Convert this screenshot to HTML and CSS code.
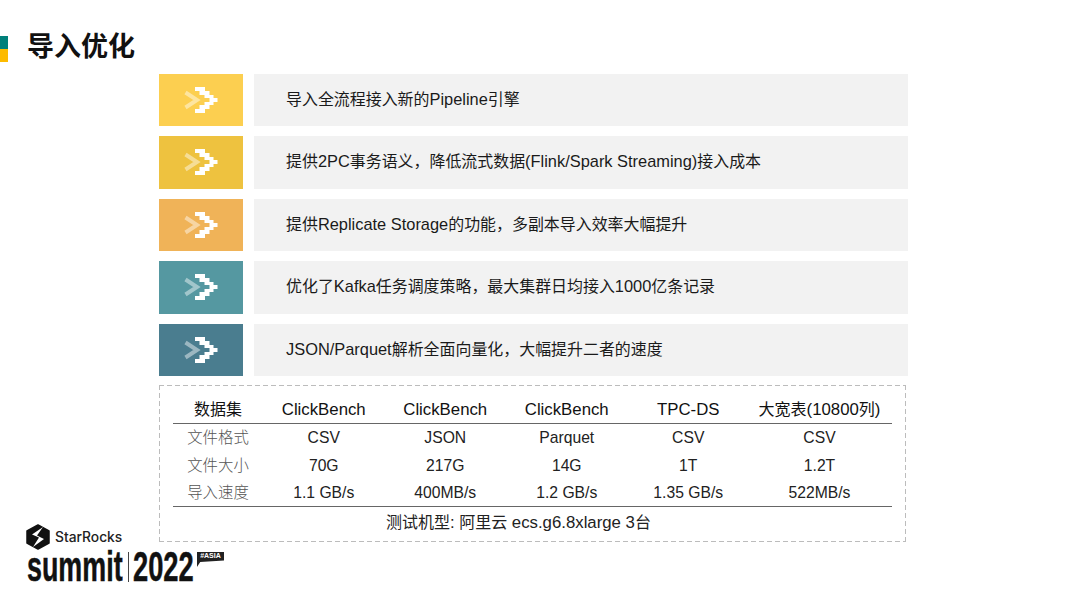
FILE: index.html
```html
<!DOCTYPE html>
<html lang="zh-CN">
<head>
<meta charset="utf-8">
<title>导入优化</title>
<link rel="stylesheet" href="styles.css">
</head>
<body>
<svg class="defs" width="0" height="0" aria-hidden="true">
  <defs>
    <g id="chev">
      <polyline class="chev-faint" points="26.5,18.5 38,26 26.5,33.5"/>
      <polygon class="chev-solid" points="36,13 46,13 46,17 50.5,17 50.5,21 54.5,21 54.5,24 58.5,24 58.5,28 54.5,28 54.5,31 50.5,31 50.5,35 46,35 46,39 36,39 36,35 40.5,35 40.5,31 45.5,31 45.5,28 50.5,28 50.5,24 45.5,24 45.5,21 40.5,21 40.5,17 36,17"/>
    </g>
  </defs>
</svg>
<main class="page">
  <header class="title-bar">
    <div class="marker"><span class="marker-teal"></span><span class="marker-gold"></span></div>
    <h1 class="title">导入优化</h1>
  </header>

  <section class="rows">
    <div class="row"><div class="tile tile-1"><svg viewBox="0 0 84 52"><use href="#chev"/></svg></div><p class="bar">导入全流程接入新的<span class="en">Pipeline</span>引擎</p></div>
    <div class="row"><div class="tile tile-2"><svg viewBox="0 0 84 52"><use href="#chev"/></svg></div><p class="bar">提供<span class="en">2PC</span>事务语义，降低流式数据<span class="en">(Flink/Spark Streaming)</span>接入成本</p></div>
    <div class="row"><div class="tile tile-3"><svg viewBox="0 0 84 52"><use href="#chev"/></svg></div><p class="bar">提供<span class="en">Replicate Storage</span>的功能，多副本导入效率大幅提升</p></div>
    <div class="row"><div class="tile tile-4"><svg viewBox="0 0 84 52"><use href="#chev"/></svg></div><p class="bar">优化了<span class="en">Kafka</span>任务调度策略，最大集群日均接入<span class="en">1000</span>亿条记录</p></div>
    <div class="row"><div class="tile tile-5"><svg viewBox="0 0 84 52"><use href="#chev"/></svg></div><p class="bar"><span class="en">JSON/Parquet</span>解析全面向量化，大幅提升二者的速度</p></div>
  </section>

  <section class="box">
    <div class="grid grid-head">
      <span>数据集</span><span class="en-h">ClickBench</span><span class="en-h">ClickBench</span><span class="en-h">ClickBench</span><span class="en-h">TPC-DS</span><span>大宽表<span class="en-h">(10800</span>列<span class="en-h">)</span></span>
    </div>
    <div class="grid grid-body">
      <span class="label">文件格式</span><span>CSV</span><span>JSON</span><span>Parquet</span><span>CSV</span><span>CSV</span>
      <span class="label">文件大小</span><span>70G</span><span>217G</span><span>14G</span><span>1T</span><span>1.2T</span>
      <span class="label">导入速度</span><span>1.1 GB/s</span><span>400MB/s</span><span>1.2 GB/s</span><span>1.35 GB/s</span><span>522MB/s</span>
    </div>
    <p class="note">测试机型<span class="en-h">: </span>阿里云 <span class="en-h">ecs.g6.8xlarge 3</span>台</p>
  </section>

  <footer class="logo">
    <div class="logo-top">
      <svg class="logo-mark" viewBox="0 0 24 26">
        <polygon class="mark-hex" points="12,1 23,7 23,19 12,25 1,19 1,7"/>
        <polygon class="mark-bolt" points="17,3 6,10.5 13,13.5 7,23 18,15 11,11.5"/>
      </svg>
      <span class="logo-name">StarRocks</span>
    </div>
    <div class="logo-bottom">
      <span class="logo-summit">summit</span><span class="logo-sep"></span><span class="logo-year">2022</span><span class="logo-tag">#ASIA</span>
    </div>
  </footer>
</main>
</body>
</html>
```
FILE: styles.css
```css
* { box-sizing: border-box; }
html, body { margin: 0; padding: 0; background: #fff; }
body {
  width: 1080px;
  height: 608px;
  overflow: hidden;
  font-family: "Liberation Sans", "Noto Sans CJK SC", sans-serif;
  color: #111;
}
.defs { position: absolute; }
.page { display: flex; flex-direction: column; height: 608px; }

.title-bar { display: flex; align-items: center; height: 74px; padding-top: 24px; gap: 19px; }
.marker { display: flex; flex-direction: column; width: 8px; height: 26px; }
.marker-teal { flex: 1; background: #00807a; }
.marker-gold { flex: 1; background: #fdbb00; }
.title { margin: 0 0 4px; font-size: 27px; line-height: 40px; font-weight: 700; color: #111; }

.rows { display: flex; flex-direction: column; gap: 10.2px; padding-left: 159px; }
.row { display: flex; gap: 11px; height: 52.3px; }
.tile { width: 84px; flex: none; }
.tile svg { display: block; width: 84px; height: 52px; }
.tile-1 { background: #fccf50; }
.tile-2 { background: #eec23f; }
.tile-3 { background: #f0b358; }
.tile-4 { background: #5598a1; }
.tile-5 { background: #4a7d8f; }
.chev-solid { fill: #fff; }
.chev-faint { fill: none; stroke: #fff; stroke-width: 4; opacity: .45; }
.bar {
  margin: 0;
  width: 654px;
  padding-left: 32px;
  background: #f2f2f2;
  font-size: 15.95px;
  line-height: 50px;
  color: #1a1a1a;
}
.en { font-size: 16.4px; }

.box {
  margin: 8.7px 0 0 159px;
  width: 747px;
  height: 157px;
  padding: 8px 14px 0;
  text-align: center;
  background-image:
    repeating-linear-gradient(90deg, #bcbcbc 0 5px, transparent 5px 8px),
    repeating-linear-gradient(90deg, #bcbcbc 0 5px, transparent 5px 8px),
    repeating-linear-gradient(0deg, #bcbcbc 0 5px, transparent 5px 8px),
    repeating-linear-gradient(0deg, #bcbcbc 0 5px, transparent 5px 8px);
  background-size: 100% 1px, 100% 1px, 1px 100%, 1px 100%;
  background-position: left top, left bottom, left top, right top;
  background-repeat: no-repeat;
}
.grid { display: grid; grid-template-columns: 90px repeat(4, 121.5px) 141px; }
.grid-head {
  height: 31px;
  line-height: 33px;
  font-size: 16px;
  color: #111;
  border-bottom: 1px solid #666;
}
.en-h { font-size: 16.8px; }
.grid-body {
  grid-auto-rows: 27.6px;
  height: 83px;
  padding-top: .3px;
  align-items: center;
  font-size: 15.7px;
  color: #222;
  border-bottom: 1px solid #666;
}
.label { color: #555; font-size: 15.4px; font-weight: 300; line-height: 20px; }
.note { margin: 0; padding-right: 28px; font-size: 16px; line-height: 32px; color: #222; }

.logo { margin: -18px 0 0 26px; width: 200px; color: #111; }
.logo-top { display: flex; align-items: center; gap: 5px; height: 26px; }
.logo-mark { width: 24px; height: 26px; display: block; }
.mark-hex { fill: #111; stroke: #111; stroke-width: 1.5; stroke-linejoin: round; }
.mark-bolt { fill: #fff; }
.logo-name { font-family: "Inter", "Liberation Sans", sans-serif; font-size: 13.8px; font-weight: 500; color: #222; }
.logo-bottom { display: flex; align-items: flex-start; margin: -1px 0 0 1px; height: 36px; }
.logo-summit, .logo-year {
  display: block;
  flex: none;
  font-weight: 700;
  font-size: 42px;
  line-height: 35px;
  color: #111;
  transform: scaleX(.64);
  transform-origin: left top;
  -webkit-text-stroke: .5px #111;
}
.logo-summit { width: 149.4px; margin-right: -54px; }
.logo-sep { flex: none; width: 1px; height: 30px; background: #444; margin: 3px 4px 0 5.6px; }
.logo-year { width: 93.4px; margin-right: -32.4px; transform: scaleX(.65); }
.logo-tag {
  position: relative;
  flex: none;
  margin: 3px 0 0 3px;
  height: 8px;
  width: 27px;
  background: #222;
  color: #fff;
  font-size: 7px;
  font-weight: 700;
  line-height: 8px;
  text-align: center;
}
.logo-tag::after {
  content: "";
  position: absolute;
  left: 0;
  top: 8px;
  width: 27px;
  height: 7px;
  background: #222;
  clip-path: polygon(0 0, 100% 0, 100% 10%, 12% 30%, 0 100%);
}
```
